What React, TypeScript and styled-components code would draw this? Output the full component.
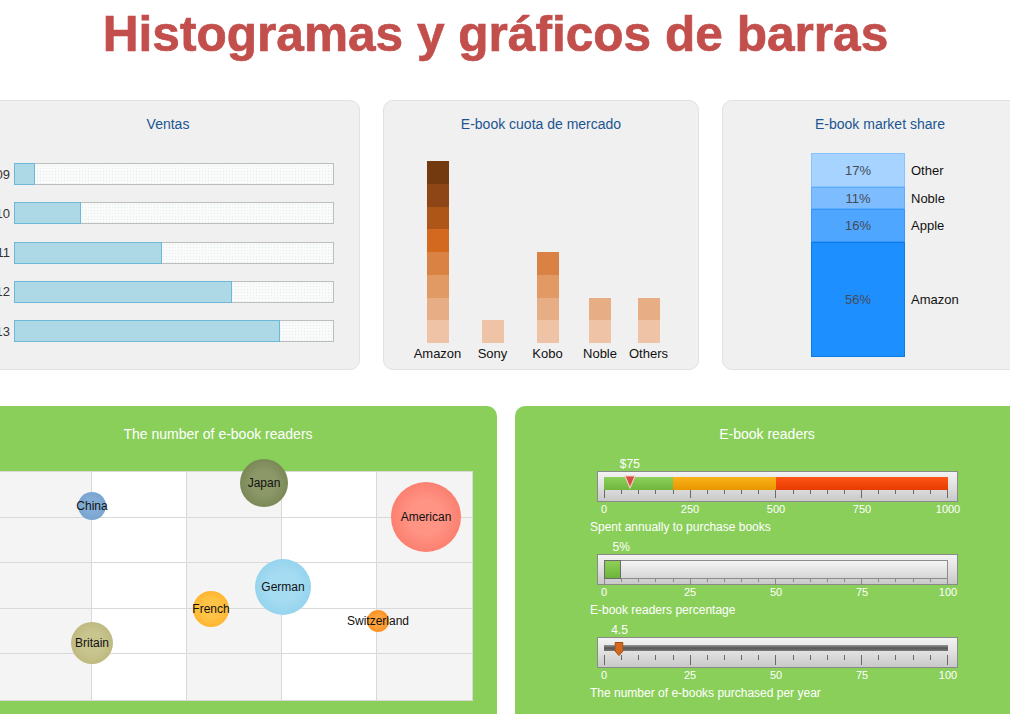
import React from 'react';
import styled, { createGlobalStyle } from 'styled-components';

const GlobalStyle = createGlobalStyle`
  html, body {
    margin: 0;
    padding: 0;
    background: #ffffff;
    overflow: hidden;
  }
  body {
    font-family: "Liberation Sans", Arial, sans-serif;
  }
`;

const Page = styled.div`
  width: 1010px;
  height: 714px;
  overflow: hidden;
`;

const Header = styled.h1`
  margin: 0;
  height: 100px;
  box-sizing: border-box;
  padding: 6px 19px 0 0;
  text-align: center;
  font: bold 49.6px/57px "Liberation Sans", Arial, sans-serif;
  color: #c24f4c;
  -webkit-text-stroke: 0.7px #c24f4c;
  white-space: nowrap;
`;

const Row = styled.div<{ $offset: number; $gap: number; $top?: number }>`
  display: flex;
  gap: ${p => p.$gap}px;
  margin-left: ${p => p.$offset}px;
  margin-top: ${p => p.$top ?? 0}px;
`;

const GrayPanel = styled.section<{ $w: number }>`
  flex: none;
  width: ${p => p.$w}px;
  height: 270px;
  box-sizing: border-box;
  background: #f0f0f0;
  border: 1px solid #e1e1e1;
  border-radius: 10px;
  padding-top: 14px;
`;

const GreenPanel = styled.section<{ $w: number }>`
  flex: none;
  width: ${p => p.$w}px;
  height: 340px;
  box-sizing: border-box;
  background: #8bcf5b;
  border-radius: 10px;
  padding-top: 19px;
`;

const PanelTitle = styled.h2<{ $light?: boolean }>`
  margin: 0;
  font: normal 14px/18px "Liberation Sans", Arial, sans-serif;
  text-align: center;
  color: ${p => (p.$light ? '#ffffff' : '#1b5592')};
`;

/* ---------- Ventas ---------- */

const BarList = styled.div`
  display: flex;
  flex-direction: column;
  gap: 17.25px;
  margin-top: 30px;
`;

const BarRow = styled.div`
  display: flex;
  align-items: center;
  gap: 4px;
`;

const BarLabel = styled.span`
  width: 33px;
  text-align: right;
  font-size: 13px;
  color: #333;
`;

const Track = styled.div`
  display: flex;
  width: 320px;
  height: 22px;
  box-sizing: border-box;
  border: 1px solid #bdbdbd;
  background-color: #f9fafa;
  background-image: radial-gradient(#e6ebeb 0.6px, transparent 0.8px);
  background-size: 3px 3px;
`;

const Fill = styled.div`
  margin: -1px 0 -1px -1px;
  box-sizing: border-box;
  border: 1px solid #6db8d6;
  background: #add8e6;
`;

/* ---------- cuota de mercado ---------- */

const ColumnChart = styled.div`
  display: flex;
  align-items: flex-end;
  margin-top: 28px;
  padding-left: 26px;
`;

const Column = styled.div<{ $w: number }>`
  width: ${p => p.$w}px;
  display: flex;
  flex-direction: column;
  align-items: center;
`;

const Stack = styled.div`
  display: flex;
  flex-direction: column;
  width: 22px;
`;

const Block = styled.div<{ $c: string }>`
  height: 22.75px;
  background: ${p => p.$c};
`;

const ColumnLabel = styled.span`
  margin-top: 3px;
  font-size: 13px;
  line-height: 15px;
  color: #111;
  white-space: nowrap;
`;

/* ---------- market share ---------- */

const ShareBar = styled.div`
  margin-top: 20px;
  padding-left: 88px;
  display: flex;
  flex-direction: column;
`;

const ShareRow = styled.div`
  display: flex;
  align-items: center;
`;

const ShareBox = styled.div<{ $h: number; $bg: string; $bd: string }>`
  width: 94px;
  height: ${p => p.$h}px;
  box-sizing: border-box;
  background: ${p => p.$bg};
  border: 1px solid ${p => p.$bd};
  display: flex;
  align-items: center;
  justify-content: center;
  font-size: 13px;
  color: #454a55;
`;

const ShareLabel = styled.span`
  margin-left: 6px;
  font-size: 13px;
  color: #111;
`;

/* ---------- bubble chart ---------- */

const PlotArea = styled.div`
  position: relative;
  width: 477px;
  height: 230px;
  margin: 28px 0 0 57px;
  box-sizing: border-box;
  border: 1px solid #d9d9d9;
  display: grid;
  grid-template-columns: repeat(5, 1fr);
  grid-template-rows: repeat(5, 1fr);
`;

const Cell = styled.div<{ $shade: boolean; $lastCol: boolean; $lastRow: boolean }>`
  background: ${p => (p.$shade ? '#f4f4f4' : '#ffffff')};
  border-right: ${p => (p.$lastCol ? 'none' : '1px solid #d9d9d9')};
  border-bottom: ${p => (p.$lastRow ? 'none' : '1px solid #d9d9d9')};
`;

const Bubble = styled.div<{ $x: number; $y: number; $r: number; $c: string; $e: string }>`
  position: absolute;
  left: ${p => p.$x - p.$r}px;
  top: ${p => p.$y - p.$r}px;
  width: ${p => p.$r * 2}px;
  height: ${p => p.$r * 2}px;
  border-radius: 50%;
  background: radial-gradient(circle at 50% 50%, ${p => p.$c} 0%, ${p => p.$c} 35%, ${p => p.$e} 100%);
  display: flex;
  align-items: center;
  justify-content: center;
`;

const BubbleLabel = styled.span`
  font-size: 12px;
  color: #111;
  white-space: nowrap;
`;

/* ---------- gauges ---------- */

const Gauges = styled.div`
  margin-top: 14px;
  padding-left: 75px;
  display: flex;
  flex-direction: column;
  gap: 6px;
`;

const GaugeBlock = styled.div`
  display: flex;
  flex-direction: column;
`;

const Axis = styled.div`
  margin-left: 14px;
  width: 344px;
  display: flex;
`;

const ValueMark = styled.span`
  width: 0;
  display: flex;
  justify-content: center;
  font-size: 12px;
  line-height: 14px;
  color: #fff;
  white-space: nowrap;
`;

const GaugeBox = styled.div<{ $padTop: number }>`
  margin-left: 7px;
  width: 361px;
  height: 31px;
  box-sizing: border-box;
  border: 1px solid #8a8a8a;
  background: linear-gradient(#f3f3f3, #e2e2e2 45%, #c9c9c9);
  padding: ${p => p.$padTop}px 9px 0 6px;
  display: flex;
  flex-direction: column;
`;

const BarWrap = styled.div`
  position: relative;
  display: flex;
`;

const Zone = styled.div<{ $w: number; $top: string; $bottom: string }>`
  width: ${p => p.$w}%;
  height: 13px;
  background: linear-gradient(${p => p.$top}, ${p => p.$bottom});
`;

const LevelTrack = styled.div`
  flex: 1;
  height: 19px;
  box-sizing: border-box;
  border: 1px solid #8c8c8c;
  background: linear-gradient(#f4f4f4, #d6d6d6);
  display: flex;
`;

const LevelFill = styled.div`
  margin: -1px 0 -1px -1px;
  box-sizing: border-box;
  border: 1px solid #6b6b6b;
  background: linear-gradient(#8fcf58, #6cb53a);
`;

const Groove = styled.div`
  flex: 1;
  height: 6px;
  background: linear-gradient(#9a9a9a, #555 50%, #7a7a7a);
`;

const Marker = styled.div<{ $top: number }>`
  position: absolute;
  top: ${p => p.$top}px;
  transform: translateX(-50%);
  line-height: 0;

  svg {
    display: block;
  }
`;

const Ticks = styled.div<{ $gap: number; $h: number }>`
  margin-top: ${p => p.$gap}px;
  height: ${p => p.$h}px;
  display: flex;
  justify-content: space-between;
  align-items: flex-start;
`;

const Tick = styled.span<{ $h: number; $c: string }>`
  width: 1px;
  height: ${p => p.$h}px;
  background: ${p => p.$c};
`;

const ScaleLabel = styled.span`
  width: 0;
  display: flex;
  justify-content: center;
  font-size: 11px;
  line-height: 14px;
  color: #fff;
  white-space: nowrap;
`;

const Caption = styled.span`
  margin-top: 4px;
  font-size: 12px;
  line-height: 14px;
  color: #fff;
  white-space: nowrap;
`;

/* ---------- data ---------- */

const sales = [
  { year: '2009', pct: 6.6 },
  { year: '2010', pct: 21 },
  { year: '2011', pct: 46.6 },
  { year: '2012', pct: 68.5 },
  { year: '2013', pct: 83.5 },
];

const shades = ['#efc3a6', '#e7ad84', '#e29a64', '#d98244', '#d2691f', '#ae5617', '#8f4616', '#73390f'];

const vendors = [
  { name: 'Amazon', n: 8, w: 55 },
  { name: 'Sony', n: 1, w: 55 },
  { name: 'Kobo', n: 4, w: 55 },
  { name: 'Noble', n: 2, w: 50 },
  { name: 'Others', n: 2, w: 47 },
];

const shares = [
  { pct: '17%', label: 'Other', h: 34, bg: '#a6d3ff', bd: '#86c3ff' },
  { pct: '11%', label: 'Noble', h: 22, bg: '#7dbcff', bd: '#5fadff' },
  { pct: '16%', label: 'Apple', h: 33, bg: '#4ea6ff', bd: '#3495ff' },
  { pct: '56%', label: 'Amazon', h: 115, bg: '#1e8fff', bd: '#0b7be6' },
];

const bubbles = [
  { name: 'China', x: 95, y: 34, r: 14, c: '#84add6', e: '#6d9dcb' },
  { name: 'Japan', x: 267, y: 11, r: 24, c: '#8c9868', e: '#6c7a4a' },
  { name: 'American', x: 429, y: 45, r: 35, c: '#ff9384', e: '#f8705f' },
  { name: 'German', x: 286, y: 115, r: 28, c: '#a6dcf2', e: '#88cdea' },
  { name: 'French', x: 214, y: 137, r: 18, c: '#ffc447', e: '#ffaa1c' },
  { name: 'Switzerland', x: 381, y: 149, r: 11, c: '#ffa23c', e: '#f38612' },
  { name: 'Britain', x: 95, y: 171, r: 21, c: '#c9c58f', e: '#b4b073' },
];

const TickRow: React.FC<{ gap: number; h: number; major: number; minor: number; color: string }> = ({ gap, h, major, minor, color }) => (
  <Ticks $gap={gap} $h={h}>
    {Array.from({ length: 21 }, (_, i) => (
      <Tick key={i} $h={i % 5 === 0 ? major : minor} $c={color} />
    ))}
  </Ticks>
);

const Scale: React.FC<{ values: string[] }> = ({ values }) => (
  <Axis style={{ justifyContent: 'space-between' }}>
    {values.map(v => (
      <ScaleLabel key={v}>{v}</ScaleLabel>
    ))}
  </Axis>
);

const Value: React.FC<{ text: string; pct: number }> = ({ text, pct }) => (
  <Axis>
    <ValueMark style={{ marginLeft: `${pct}%` }}>{text}</ValueMark>
  </Axis>
);

const App: React.FC = () => {
  return (
    <Page>
      <GlobalStyle />
      <Header>Histogramas y gráficos de barras</Header>

      <Row $offset={-24} $gap={23}>
        <GrayPanel $w={384}>
          <PanelTitle>Ventas</PanelTitle>
          <BarList>
            {sales.map(s => (
              <BarRow key={s.year}>
                <BarLabel>{s.year}</BarLabel>
                <Track>
                  <Fill style={{ width: `${s.pct}%` }} />
                </Track>
              </BarRow>
            ))}
          </BarList>
        </GrayPanel>

        <GrayPanel $w={316}>
          <PanelTitle>E-book cuota de mercado</PanelTitle>
          <ColumnChart>
            {vendors.map(v => (
              <Column key={v.name} $w={v.w}>
                <Stack>
                  {shades
                    .slice(0, v.n)
                    .reverse()
                    .map(c => (
                      <Block key={c} $c={c} />
                    ))}
                </Stack>
                <ColumnLabel>{v.name}</ColumnLabel>
              </Column>
            ))}
          </ColumnChart>
        </GrayPanel>

        <GrayPanel $w={316}>
          <PanelTitle>E-book market share</PanelTitle>
          <ShareBar>
            {shares.map(s => (
              <ShareRow key={s.label}>
                <ShareBox $h={s.h} $bg={s.bg} $bd={s.bd}>
                  {s.pct}
                </ShareBox>
                <ShareLabel>{s.label}</ShareLabel>
              </ShareRow>
            ))}
          </ShareBar>
        </GrayPanel>
      </Row>

      <Row $offset={-61} $gap={18} $top={36}>
        <GreenPanel $w={558}>
          <PanelTitle $light>The number of e-book readers</PanelTitle>
          <PlotArea>
            {Array.from({ length: 25 }, (_, i) => (
              <Cell key={i} $shade={i % 5 % 2 === 0} $lastCol={i % 5 === 4} $lastRow={i >= 20} />
            ))}
            {bubbles.map(b => (
              <Bubble key={b.name} $x={b.x} $y={b.y} $r={b.r} $c={b.c} $e={b.e}>
                <BubbleLabel>{b.name}</BubbleLabel>
              </Bubble>
            ))}
          </PlotArea>
        </GreenPanel>

        <GreenPanel $w={504}>
          <PanelTitle $light>E-book readers</PanelTitle>
          <Gauges>
            <GaugeBlock>
              <Value text="$75" pct={7.5} />
              <GaugeBox $padTop={5}>
                <BarWrap>
                  <Zone $w={20} $top="#8dd05a" $bottom="#6fb63c" />
                  <Zone $w={30} $top="#fbb31a" $bottom="#e89500" />
                  <Zone $w={50} $top="#ff5517" $bottom="#e53b00" />
                  <Marker $top={-2} style={{ left: '7.5%' }}>
                    <svg width="12" height="14" viewBox="0 0 12 14">
                      <path d="M1 1 H11 L6 13 Z" fill="#d54a45" stroke="#f3c9c0" strokeWidth="1.2" />
                    </svg>
                  </Marker>
                </BarWrap>
                <TickRow gap={0} h={8} major={8} minor={4} color="#6a6a6a" />
              </GaugeBox>
              <Scale values={['0', '250', '500', '750', '1000']} />
              <Caption>Spent annually to purchase books</Caption>
            </GaugeBlock>

            <GaugeBlock>
              <Value text="5%" pct={5} />
              <GaugeBox $padTop={5}>
                <BarWrap>
                  <LevelTrack>
                    <LevelFill style={{ width: '5%' }} />
                  </LevelTrack>
                </BarWrap>
                <TickRow gap={0} h={5} major={5} minor={3} color="#8a8a8a" />
              </GaugeBox>
              <Scale values={['0', '25', '50', '75', '100']} />
              <Caption>E-book readers percentage</Caption>
            </GaugeBlock>

            <GaugeBlock>
              <Value text="4.5" pct={4.5} />
              <GaugeBox $padTop={7}>
                <BarWrap>
                  <Groove />
                  <Marker $top={-3} style={{ left: '4.5%' }}>
                    <svg width="9" height="14" viewBox="0 0 9 14">
                      <path d="M0.5 0.5 H8.5 V9 L4.5 13.5 L0.5 9 Z" fill="#d2691e" stroke="#a44c10" />
                    </svg>
                  </Marker>
                </BarWrap>
                <TickRow gap={4} h={10} major={10} minor={5} color="#6a6a6a" />
              </GaugeBox>
              <Scale values={['0', '25', '50', '75', '100']} />
              <Caption>The number of e-books purchased per year</Caption>
            </GaugeBlock>
          </Gauges>
        </GreenPanel>
      </Row>
    </Page>
  );
};

export default App;
